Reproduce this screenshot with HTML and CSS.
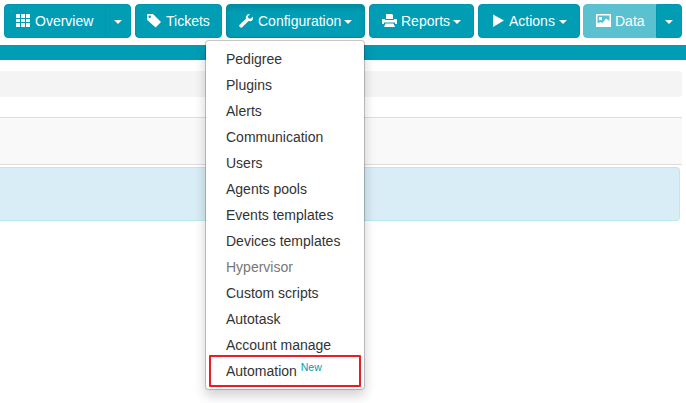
FILE: index.html
```html
<!DOCTYPE html>
<html lang="en">
<head>
<meta charset="utf-8">
<title>Configuration</title>
<link rel="stylesheet" href="styles.css">
</head>
<body>
<nav class="toolbar">
  <div class="group">
    <button class="btn overview"><svg class="icon" viewBox="0 0 14 14"><path d="M0 0h4v4H0zM5 0h4v4H5zM10 0h4v4h-4zM0 5h4v3H0zM5 5h4v3H5zM10 5h4v3h-4zM0 9h4v4H0zM5 9h4v4H5zM10 9h4v4h-4z"/></svg>Overview</button>
    <button class="btn toggle" aria-label="Overview menu"><span class="caret"></span></button>
  </div>
  <button class="btn tickets"><svg class="icon" viewBox="0 0 14 14"><path fill-rule="evenodd" d="M0 .7Q0 0 .7 0H5.400q.5 0 .8.3L14 8.100 8.700 13.500.4 6.200Q0 5.800 0 5.300zM2.700 1.500a1.250 1.250 0 1 0 0 2.500 1.250 1.250 0 0 0 0-2.500z"/></svg>Tickets</button>
  <div class="dropdown">
    <button class="btn configuration active"><svg class="icon" viewBox="0 0 14 14"><path d="M10.900.2 8.900 2.200l.4 2.100 2.200.5 2.200-2.100c.7 2-.1 3.700-1.500 4.300-1.100.5-2 .3-2.700 0L3.200 13.200c-.6.6-1.400.6-2 .1l-.7-.7c-.5-.6-.4-1.400.1-1.900L7 4.700c-.4-1.200-.2-2.400.6-3.300C8.500.3 9.700-.2 10.900.2z"/></svg>Configuration<span class="caret"></span></button>
    <ul class="menu">
      <li>Pedigree</li>
      <li>Plugins</li>
      <li>Alerts</li>
      <li>Communication</li>
      <li>Users</li>
      <li>Agents pools</li>
      <li>Events templates</li>
      <li>Devices templates</li>
      <li class="disabled">Hypervisor</li>
      <li>Custom scripts</li>
      <li>Autotask</li>
      <li>Account manage</li>
      <li class="highlight">Automation <sup>New</sup></li>
    </ul>
  </div>
  <button class="btn reports"><svg class="icon wide" viewBox="0 0 15 14"><path d="M4 0h6l1 1v4H4zM0 5.500L1 5h2v1h9V5h2l1 .5V10h-2V8.500H2V10H0zM3.500 9.500h8L13 13H2z"/></svg>Reports<span class="caret"></span></button>
  <button class="btn actions"><svg class="icon play" viewBox="0 0 11 14"><path d="M0 .5 11 6.500 0 13z"/></svg>Actions<span class="caret"></span></button>
  <div class="group data-group">
    <button class="btn data" disabled><svg class="icon wide" viewBox="0 0 15 14"><path fill-rule="evenodd" d="M0 0h15v13H0zM1.500 1.500v10h12v-10z"/><path d="M1 12V9.500L4.500 8l2 1L10 4.500 11.500 5.500 14 7.500V12zM3 3h3v3H3z"/></svg>Data</button>
    <button class="btn toggle" aria-label="Data menu"><span class="caret"></span></button>
  </div>
</nav>
<div class="band"></div>
<div class="breadcrumb"></div>
<div class="panel"></div>
<div class="notice"></div>
</body>
</html>
```

FILE: styles.css
```css
* { box-sizing: border-box; }
body {
  margin: 0;
  height: 403px;
  overflow: hidden;
  background: #fff;
  color: #333;
  font: 14px/20px "Liberation Sans", Arial, sans-serif;
}
.toolbar { display: flex; gap: 4px; padding: 4px 4px 7px; }
.group { display: flex; }
.dropdown { position: relative; }
.btn {
  display: flex;
  align-items: center;
  height: 34px;
  padding: 0 0 0 11px;
  border: 1px solid #0096ad;
  border-radius: 4px;
  background: #009db5;
  color: #fff;
  font: inherit;
  white-space: nowrap;
}
.icon { flex: none; width: 14px; height: 14px; margin-right: 5px; fill: currentColor; }
.wide { width: 15px; margin-right: 4px; }
.play { width: 11px; }
.caret {
  margin: 2px 0 0 3px;
  border: 4px solid transparent;
  border-top-color: #fff;
  border-bottom: 0;
}
.overview { width: 102px; }
.tickets { width: 87px; padding-left: 11px; }
.configuration { width: 139px; padding-left: 12px; }
.reports { width: 105px; padding-left: 12px; }
.actions { width: 102px; padding-left: 14px; }
.actions .caret { margin-left: 4px; }
.data { width: 73px; padding-left: 12px; }
.group .btn:first-child { border-radius: 4px 0 0 4px; }
.toggle { width: 26px; padding: 0; justify-content: center; border-radius: 0 4px 4px 0; }
.toggle .caret { margin-left: 0; }
.overview + .toggle { margin-left: -1px; }
.data-group { margin-left: -1px; }
.group .data { background: #5bc0cf; border-color: #5bc0cf; }
.active { border-color: #008da4; box-shadow: inset 0 3px 5px rgba(0, 0, 0, .125); }
.menu {
  position: absolute;
  z-index: 2;
  top: 36px;
  right: 0;
  width: 160px;
  margin: 0;
  padding: 5px 0;
  border: 1px solid rgba(0, 0, 0, .2);
  border-radius: 4px;
  background: #fff;
  background-clip: padding-box;
  box-shadow: 0 6px 12px rgba(0, 0, 0, .175);
  list-style: none;
}
.menu li { height: 26px; padding: 3px 20px; white-space: nowrap; }
.menu .disabled { color: #777; }
.menu .highlight {
  height: 32px;
  margin: -3px 3px;
  padding: 4px 15px;
  border: 2px solid #ed1c24;
  border-radius: 1px;
}
sup { position: relative; top: -5px; color: #009db5; font-size: 10.5px; line-height: 0; vertical-align: baseline; }
.band { height: 15px; background: #009db5; }
.breadcrumb { height: 26px; margin: 11px 4px 20px 0; border-radius: 0 4px 4px 0; background: #f4f4f4; }
.panel { height: 48px; margin-right: 4px; border: solid #ddd; border-width: 1px 0; background: #f9f9f9; }
.notice { height: 54px; margin: 2px 6px 0 0; border: 1px solid #bce8f1; border-left: 0; border-radius: 0 4px 4px 0; background: #d9edf7; }
```
